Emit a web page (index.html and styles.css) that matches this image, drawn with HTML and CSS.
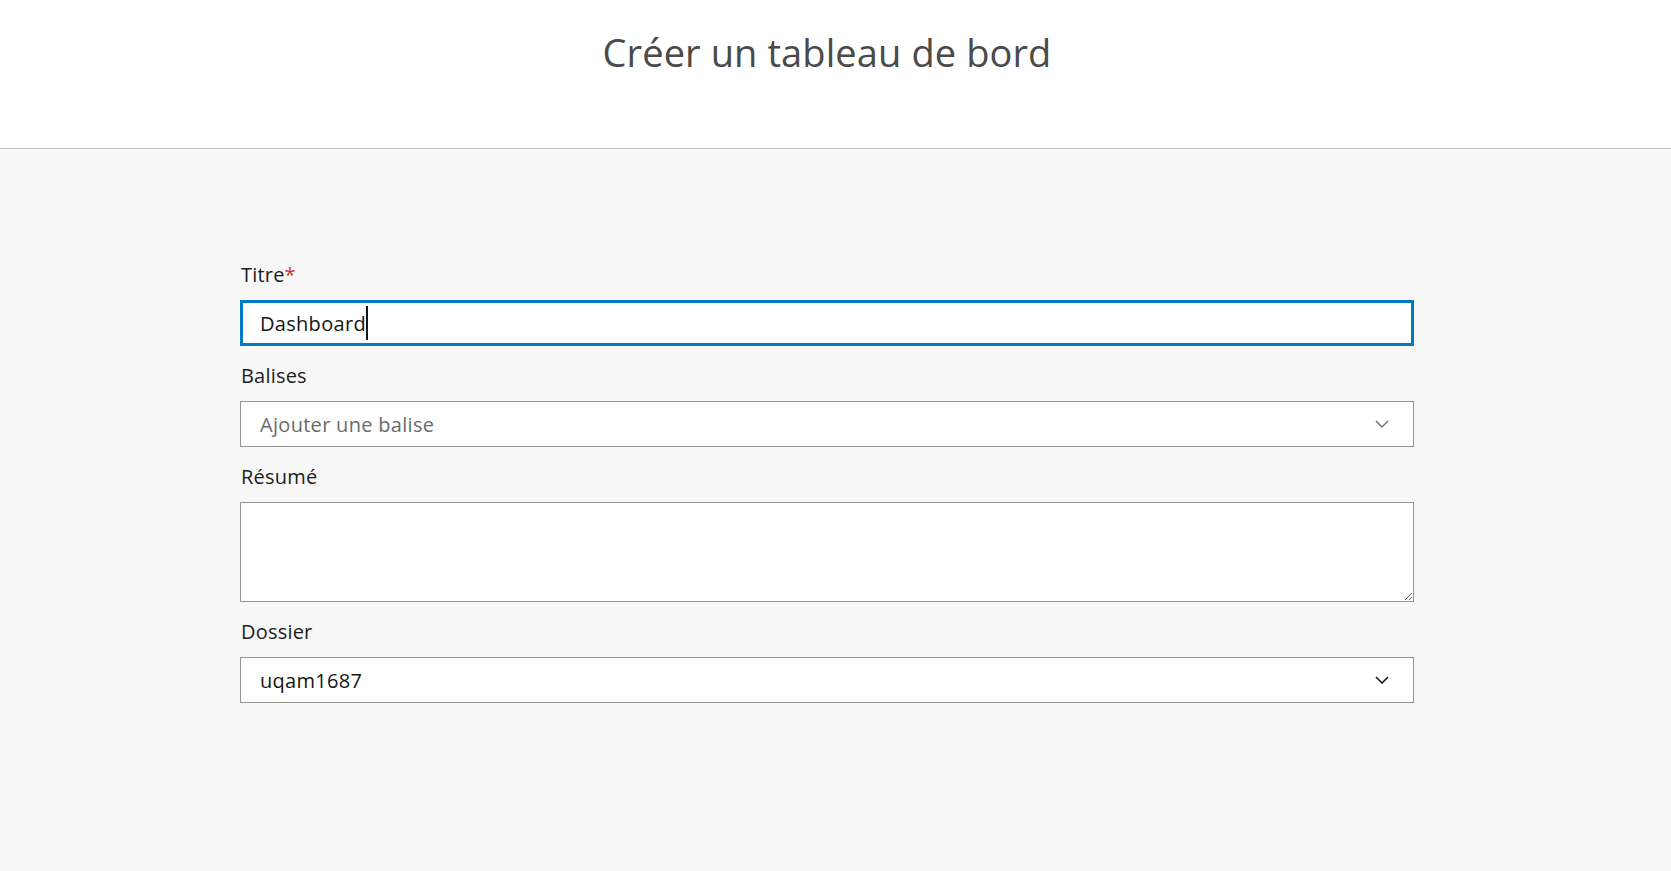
FILE: index.html
```html
<!DOCTYPE html>
<html lang="fr">
<head>
<meta charset="utf-8">
<title>Créer un tableau de bord</title>
<link rel="stylesheet" href="styles.css">
</head>
<body>
<header class="page-header">
  <h1 class="page-title">Créer un tableau de bord</h1>
</header>
<main class="page-main">
  <form class="create-form">
    <div class="field">
      <div class="field-label">Titre<span class="required">*</span></div>
      <div class="control control-focused">
        <span class="control-value">Dashboard</span><span class="caret"></span>
      </div>
    </div>
    <div class="field">
      <div class="field-label">Balises</div>
      <div class="control control-select">
        <span class="control-placeholder">Ajouter une balise</span>
        <svg class="chevron chevron-light" width="14" height="8" viewBox="0 0 14 8" aria-hidden="true"><path d="M1 1l6 6 6-6" fill="none" stroke="currentColor" stroke-width="1.4"/></svg>
      </div>
    </div>
    <div class="field">
      <div class="field-label">Résumé</div>
      <textarea class="control-textarea"></textarea>
    </div>
    <div class="field">
      <div class="field-label">Dossier</div>
      <div class="control control-select">
        <span class="control-value">uqam1687</span>
        <svg class="chevron chevron-dark" width="14" height="8" viewBox="0 0 14 8" aria-hidden="true"><path d="M1 1l6 6 6-6" fill="none" stroke="currentColor" stroke-width="1.6"/></svg>
      </div>
    </div>
  </form>
</main>
</body>
</html>
```
FILE: styles.css
```css
* { box-sizing: border-box; }
html, body { margin: 0; padding: 0; }
body {
  font-family: "Open Sans", "Lato", sans-serif;
  color: #151515;
  background: #f7f7f7;
  min-height: 871px;
}
.page-header {
  background: #ffffff;
  height: 149px;
  border-bottom: 1px solid #c4c4c4;
  padding: 28px 0 0 240px;
}
.page-title {
  margin: 0;
  width: 1174px;
  text-align: center;
  font-weight: 400;
  font-size: 38px;
  line-height: 48px;
  color: #4a4a4a;
  letter-spacing: 0.1px;
}
.page-main {
  background: #f7f7f7;
  padding: 113px 0 0 240px;
}
.create-form {
  width: 1174px;
  display: flex;
  flex-direction: column;
  gap: 17px;
}
.field { display: flex; flex-direction: column; }
.field-label {
  font-size: 20px;
  line-height: 24px;
  letter-spacing: 0.2px;
  padding-top: 1px;
  margin-bottom: 13px;
  color: #1c1c1c;
  padding-left: 1px;
}
.required { color: #d83020; }
.control {
  height: 46px;
  background: #ffffff;
  border: 1px solid #959595;
  display: flex;
  align-items: center;
  padding: 0 19px 0 19px;
  font-size: 20px;
  letter-spacing: 0.3px;
}
.control-focused {
  border: 3px solid #007ac2;
  padding-left: 17px;
}
.control-value { color: #151515; }
.control-placeholder { color: #6b6b6b; }
.caret {
  display: inline-block;
  width: 2px;
  height: 34px;
  background: #151515;
}
.control-select { justify-content: space-between; padding-right: 24px; }
.chevron { flex: none; }
.chevron-light { color: #6e6e6e; }
.chevron-dark { color: #151515; }
.control-textarea {
  display: block;
  width: 100%;
  height: 100px;
  background: #ffffff;
  border: 1px solid #959595;
  border-radius: 0;
  resize: vertical;
  font-family: inherit;
  font-size: 20px;
  padding: 10px 19px;
  outline: none;
}
```
